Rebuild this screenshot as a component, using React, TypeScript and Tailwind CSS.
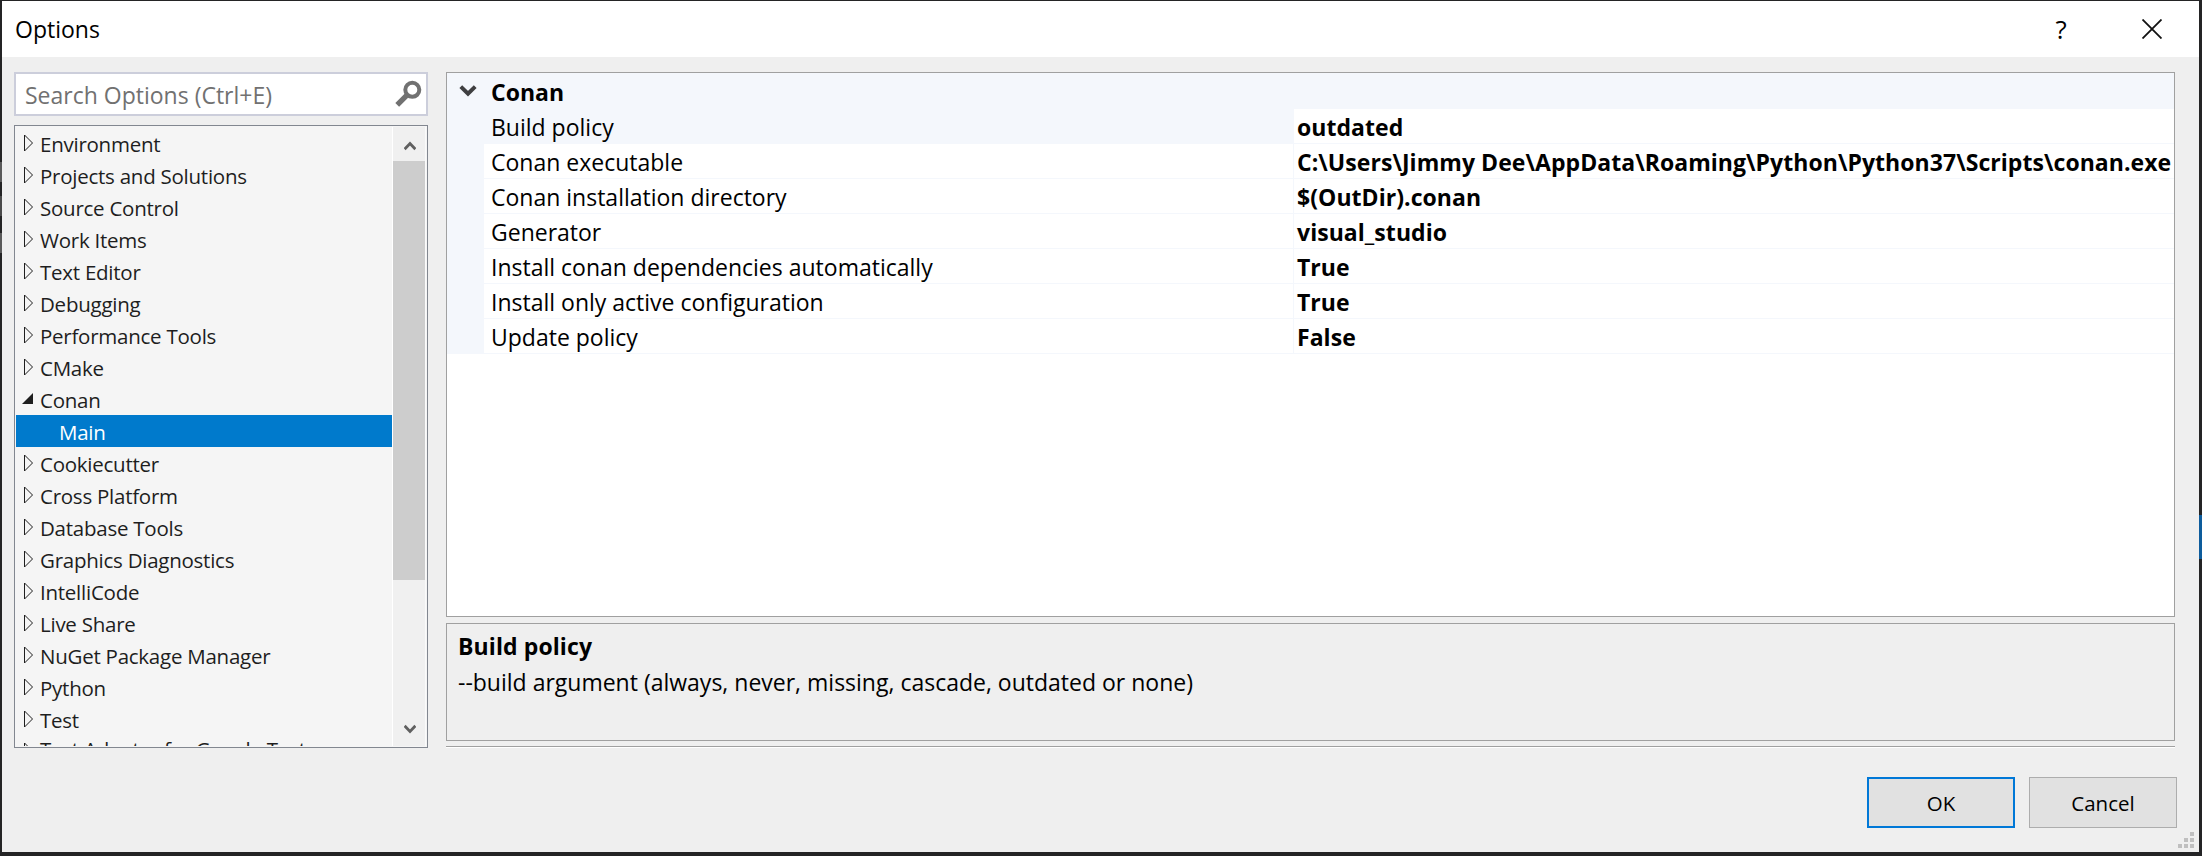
type TreeItem = { label: string; state?: "open" | "child" | "partial" };

const treeItems: TreeItem[] = [
  { label: "Environment" },
  { label: "Projects and Solutions" },
  { label: "Source Control" },
  { label: "Work Items" },
  { label: "Text Editor" },
  { label: "Debugging" },
  { label: "Performance Tools" },
  { label: "CMake" },
  { label: "Conan", state: "open" },
  { label: "Main", state: "child" },
  { label: "Cookiecutter" },
  { label: "Cross Platform" },
  { label: "Database Tools" },
  { label: "Graphics Diagnostics" },
  { label: "IntelliCode" },
  { label: "Live Share" },
  { label: "NuGet Package Manager" },
  { label: "Python" },
  { label: "Test" },
  { label: "Test Adapter for Google Test", state: "partial" },
];

const properties = [
  { name: "Build policy", value: "outdated", selected: true },
  { name: "Conan executable", value: "C:\\Users\\Jimmy Dee\\AppData\\Roaming\\Python\\Python37\\Scripts\\conan.exe" },
  { name: "Conan installation directory", value: "$(OutDir).conan" },
  { name: "Generator", value: "visual_studio" },
  { name: "Install conan dependencies automatically", value: "True" },
  { name: "Install only active configuration", value: "True" },
  { name: "Update policy", value: "False" },
];

function TitleBar() {
  return (
    <header className="flex h-14 shrink-0 items-center justify-between bg-white pr-[37px] pl-[13px] text-black">
      <h1 className="pt-px text-[23px]">Options</h1>
      <div className="flex items-center gap-[75px]">
        <button className="w-[12px] text-center text-[26px] leading-none">?</button>
        <svg width="20" height="20" viewBox="0 0 20 20" stroke="#111" strokeWidth="1.8">
          <path d="M0.5 0.5L19.5 19.5M19.5 0.5L0.5 19.5" />
        </svg>
      </div>
    </header>
  );
}

function SearchBox() {
  return (
    <div className="flex h-11 items-center justify-between border-2 border-[#cccedb] bg-white pr-1 pl-[9px] text-[23px] text-[#717171]">
      <span className="pt-0.5">Search Options (Ctrl+E)</span>
      <svg width="28" height="28" viewBox="0 0 28 28" fill="none" stroke="#717171">
        <circle cx="18.3" cy="9.8" r="7" strokeWidth="4" />
        <path d="M13.2 14.8L3.2 24.8" strokeWidth="5.4" />
      </svg>
    </div>
  );
}

function TreeRow({ label, state }: TreeItem) {
  if (state === "child") {
    return (
      <li className="flex h-8 shrink-0 items-center bg-[#007acc] pt-0.5 pl-[43px] text-white">{label}</li>
    );
  }
  return (
    <li className="flex h-8 shrink-0 items-center gap-[6px] pl-[6px]">
      {state === "open" ? (
        <svg width="12" height="18" viewBox="0 0 12 18" className="shrink-0">
          <path d="M11 3V14H0Z" fill="#1e1e1e" />
        </svg>
      ) : (
        <svg width="12" height="18" viewBox="0 0 12 18" fill="none" stroke="#1e1e1e" className="shrink-0">
          <path d="M2.5 1V17L10.5 9Z" />
        </svg>
      )}
      <span className={state === "partial" ? "pb-1" : "pt-0.5"}>{label}</span>
    </li>
  );
}

function Tree() {
  return (
    <div className="mt-[9px] flex h-[623px] border border-[#828790] bg-[#f5f5f5] p-px">
      <ul className="flex w-[376px] shrink-0 flex-col overflow-hidden text-[20.5px] tracking-[-0.25px] whitespace-nowrap text-[#1e1e1e]">
        {treeItems.map((item) => (
          <TreeRow key={item.label} {...item} />
        ))}
      </ul>
      <div className="flex w-[34px] shrink-0 flex-col border-r border-l border-r-[#fafafa] border-l-white bg-[#f0f0f0]">
        <div className="flex h-[34px] items-center justify-center pt-1 pl-px">
          <svg width="12" height="10" viewBox="0 0 12 10" fill="none" stroke="#606060" strokeWidth="2.8">
            <path d="M0.6 8.2L6 2.6L11.4 8.2" />
          </svg>
        </div>
        <div className="h-[419px] bg-[#cdcdcd]" />
        <div className="flex-1" />
        <div className="flex h-[34px] items-center justify-center pl-px">
          <svg width="12" height="10" viewBox="0 0 12 10" fill="none" stroke="#606060" strokeWidth="2.8">
            <path d="M0.6 1.8L6 7.4L11.4 1.8" />
          </svg>
        </div>
      </div>
    </div>
  );
}

function PropertyGrid() {
  return (
    <div className="flex h-[545px] flex-col border border-[#a0a0a0] bg-white text-[23px] leading-[35px] whitespace-nowrap text-black">
      <div className="flex h-9 shrink-0 items-center bg-[#f4f7fc] pl-3">
        <svg width="18" height="14" viewBox="0 0 18 14" fill="none" stroke="#3f3f41" strokeWidth="4">
          <path d="M1.8 2.6L9 9.6L16.2 2.6" />
        </svg>
        <span className="pt-[3px] pl-[14px] font-bold">Conan</span>
      </div>
      {properties.map((p) => (
        <div key={p.name} className="flex h-[35px] shrink-0">
          <div className="w-[37px] shrink-0 bg-[#f4f7fc]" />
          <div
            className={
              p.selected
                ? "w-[810px] shrink-0 border-r border-b border-[#f4f7fc] bg-[#f4f7fc] pl-[7px] leading-[37px]"
                : "w-[810px] shrink-0 border-r border-b border-[#f4f7fc] pl-[7px] leading-[37px]"
            }
          >
            {p.name}
          </div>
          <div className="h-[35px] min-w-0 flex-1 border-b border-[#f4f7fc] pl-[3px] leading-[37px] font-bold tracking-[0.05px]">
            {p.value}
          </div>
        </div>
      ))}
    </div>
  );
}

function Description() {
  return (
    <section className="mt-[6px] h-[118px] border border-[#a0a0a0] pt-1 pl-[11px] text-[23px] leading-9 text-black">
      <h2 className="font-bold tracking-[0.1px]">Build policy</h2>
      <p>--build argument (always, never, missing, cascade, outdated or none)</p>
    </section>
  );
}

function ResizeGrip() {
  return (
    <svg className="absolute right-[5px] bottom-[4px]" width="16" height="16" viewBox="0 0 16 16" fill="#bfbfbf">
      <path d="M12 0h4v4h-4zM6 6h4v4h-4zM12 6h4v4h-4zM0 12h4v4h-4zM6 12h4v4h-4zM12 12h4v4h-4z" />
    </svg>
  );
}

export default function App() {
  return (
    <div className="flex h-[856px] w-[2202px] bg-[#242425] pt-px pb-1 font-['Open_Sans','Noto_Sans',sans-serif]">
      <div className="flex w-0.5 shrink-0 flex-col pt-[161px]">
        <div className="h-5 bg-[#5a5a5a]" />
        <div className="mt-[14px] h-5 bg-[#4a4a4a]" />
        <div className="mt-[17px] h-5 bg-[#5a5a5a]" />
      </div>
      <main className="relative flex w-[2197px] shrink-0 flex-col bg-[#efefef]">
        <TitleBar />
        <div className="flex pt-[15px] pl-3">
          <aside className="w-[414px] shrink-0">
            <SearchBox />
            <Tree />
          </aside>
          <div className="ml-[18px] w-[1729px] shrink-0">
            <PropertyGrid />
            <Description />
            <div className="mt-[5px] h-0.5 border-t border-b border-t-[#a0a0a0] border-b-white" />
          </div>
        </div>
        <footer className="mt-[29px] flex justify-end gap-[14px] pr-[22px] text-[20.5px] text-black">
          <button className="h-[51px] w-[148px] border-2 border-[#0078d7] bg-[#e1e1e1] pt-px">OK</button>
          <button className="h-[51px] w-[148px] border border-[#adadad] bg-[#e1e1e1] pt-px">Cancel</button>
        </footer>
        <ResizeGrip />
      </main>
      <div className="w-[3px] shrink-0 pt-[514px]">
        <div className="h-11 bg-[#0d5c9c]" />
      </div>
    </div>
  );
}
